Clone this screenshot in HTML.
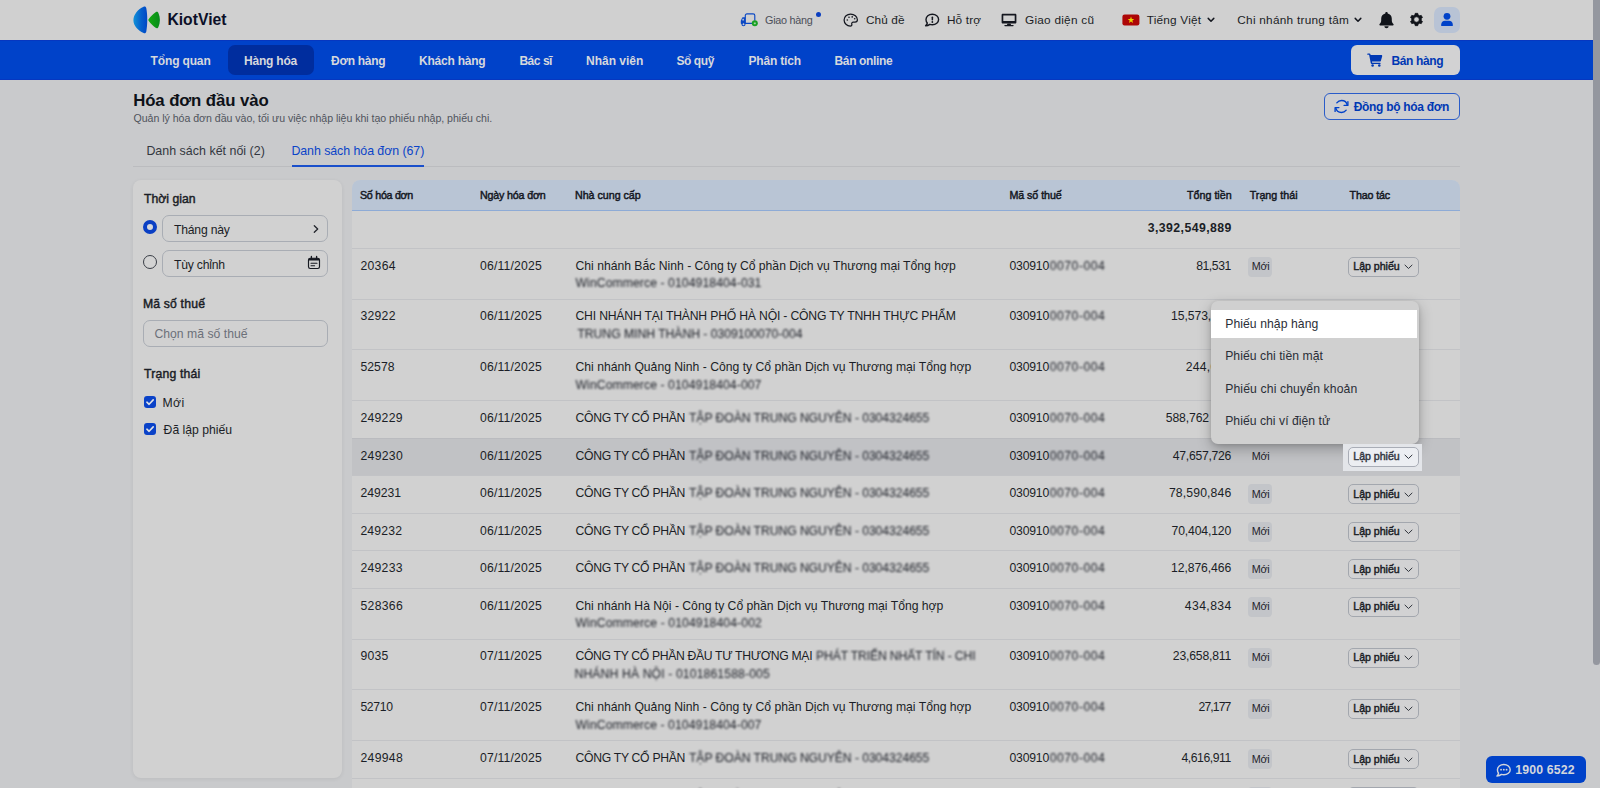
<!DOCTYPE html>
<html lang="vi">
<head>
<meta charset="utf-8">
<title>Hóa đơn đầu vào - KiotViet</title>
<style>
*{box-sizing:border-box}
html,body{margin:0;padding:0;width:1600px;height:788px;overflow:hidden;background:#c9cacc}
body{font-family:"Liberation Sans", sans-serif;color:#1b1e26;position:relative}
#app{position:absolute;left:0;top:0;width:1600px;height:788px;overflow:hidden;background:#c9cacc}
.abs{position:absolute;display:block}
h1{margin:0;font:inherit}
svg{display:block}
.t{position:absolute;display:block;white-space:nowrap}
.bl{filter:blur(1.200px)}
header.top{position:absolute;left:0;top:0;width:1600px;height:40px;background:#d0d0d0}
nav.main{position:absolute;left:0;top:40px;width:1600px;height:40px;background:#0042c9;box-shadow:inset 0 1px 0 #0637c0,inset 0 -1px 0 #0637c0}
main{position:absolute;left:0;top:0;width:1600px;height:788px}
.dot{width:5px;height:5px;border-radius:50%;background:#0b3fc0}
.ava{width:26px;height:26px;border-radius:7px;background:#b8c3d5}
.navact{background:#002d9e;border-radius:7px}
.sell{background:#d2d2d3;border-radius:6px}
.sync{border:1px solid #2a5cc9;border-radius:6px;background:#cdced1}
.tabline{height:1px;background:#bbbcbf}
.tabact{height:2px;background:#1a4fcb}
.card{background:#d1d1d1;border-radius:8px;box-shadow:0 1px 4px rgba(0,0,0,.07)}
.radio{width:14px;height:14px;border-radius:50%;border:1px solid #3a3e46;background:#d3d3d3}
.radio.on{border:4px solid #0a3fc4;background:#d6d8dc}
.inp{border:1px solid #a9adb4;border-radius:7px;background:#d1d1d1}
.chk{width:12px;height:12px;border-radius:3px;background:#0a42c8}
.grid{overflow:hidden;border-radius:8px 8px 0 0;background:#d1d1d1}
.thead{background:#b9c5d5}
.tr{border-top:1px solid #c2c3c6;background:#d1d1d1}
.tr.first{border-top-color:#8eabd6}
.tr.hov{background:#c1c2c5;border-top-color:#babbbf}
.badge{background:#c3c5c9;border-radius:4px}
.lbtn{border:1px solid #a3a7ae;border-radius:5px;background:#d2d2d3}
.lbtn.lit{background:#eceef2;border-color:#a9adb6}
.spot{background:#e3e5e9}
.z6{z-index:6}
.menu,.mtxt{z-index:5}
.menu{background:#d0d0d0;border-radius:7px;box-shadow:0 5px 14px rgba(0,0,0,.26),0 1px 4px rgba(0,0,0,.12)}
.mhi{background:#fff}
.hot{background:#0042c9;border-radius:6px}
.sb{background:#94979f;border-radius:0 0 4px 4px}
</style>
</head>
<body>
<div id="app">
<header class="top">
<svg class="abs" style="left:132px;top:5px" width="30" height="30" viewBox="0 0 30 30">
<defs><linearGradient id="lg" x1="0" y1="0" x2="1" y2="0"><stop offset="0" stop-color="#1292d8"/><stop offset=".55" stop-color="#0460cc"/><stop offset="1" stop-color="#0046c6"/></linearGradient><linearGradient id="gg" x1="0" y1="0" x2="1" y2="0"><stop offset="0" stop-color="#14aa10"/><stop offset="1" stop-color="#088a1c"/></linearGradient></defs>
<path d="M11.600 1.700 C6 4.200 1.400 9.500 1.400 15.200 C1.400 20.500 6 25.600 11.600 28 C13 28.500 14 27.900 14.300 26.400 C15.600 20 15.600 10 14.300 3.300 C14 1.800 13 1.200 11.600 1.700 Z" fill="url(#lg)"/>
<path d="M16.600 14.200 C18.500 11.500 21 9 23.600 7.200 C24.800 6.400 26 6.800 26.400 8 C28.400 12.500 28.400 17.500 26.400 22 C26 23.200 24.800 23.600 23.600 22.800 C21 21 18.500 18.500 16.600 15.800 C16.200 15.300 16.200 14.700 16.600 14.200 Z" fill="url(#gg)"/>
</svg>
<span class="t" style="left:167.40px;top:8px;line-height:23px;font-size:15.7px;color:#0c1028;font-weight:700;letter-spacing:0.020px">KiotViet</span>
<svg class="abs" style="left:740px;top:13px" width="19" height="14" viewBox="0 0 19 14" fill="none">
<path d="M5.300 10.400 V2.600 C5.300 1.500 6 .9 7 .9 H13.100 C14.200 .9 14.800 1.600 14.800 2.600 V7.200" stroke="#0b48c4" stroke-width="1.150" stroke-linecap="round"/>
<path d="M5.300 10.400 H11.800" stroke="#0b48c4" stroke-width="1.150" stroke-linecap="round"/>
<path d="M5.200 4.300 H3.300 C2.500 4.300 2.100 4.700 1.800 5.400 L.8 7.700 V10.300 C.8 10.800 1.100 11.100 1.600 11.100 H5.200 Z" fill="#0b48c4"/>
<rect x="2.300" y="5.700" width="1.700" height="1.800" rx=".3" fill="#aebbd6"/>
<circle cx="3.500" cy="11.300" r="1.500" fill="#d0d0d0" stroke="#0b48c4" stroke-width="1.100"/>
<circle cx="14.800" cy="10.300" r="3" fill="#18a022"/><rect x="13.800" y="9.400" width="2" height="1.800" rx=".4" fill="#9fd4a0"/>
</svg>
<span class="t" style="left:765.00px;top:11px;line-height:18px;font-size:10.8px;color:#4b4f58;letter-spacing:-0.265px">Giao hàng</span>
<span class="abs dot" style="left:816px;top:12px"></span>
<svg class="abs" style="left:843px;top:13px" width="16" height="14" viewBox="0 0 16 14" fill="none">
<path d="M7.6 1 C4 1 1.1 3.7 1.1 7 C1.1 10.3 3.9 13 7.3 13 C8.5 13 9.1 12.2 8.8 11.3 C8.4 10.1 9.1 9.1 10.4 9.1 H12 C13.4 9.1 14.4 8.1 14.4 6.7 C14.4 3.5 11.3 1 7.6 1 Z" stroke="#14171f" stroke-width="1.250"/>
<circle cx="4.300" cy="7" r=".8" fill="#14171f"/><circle cx="6" cy="4.300" r=".8" fill="#14171f"/><circle cx="9.200" cy="3.900" r=".8" fill="#14171f"/><circle cx="11.700" cy="5.800" r=".8" fill="#14171f"/>
</svg>
<span class="t" style="left:865.90px;top:10px;line-height:20px;font-size:11.8px;color:#1b1e26;letter-spacing:0.124px">Chủ đề</span>
<svg class="abs" style="left:924px;top:13px" width="16" height="14" viewBox="0 0 16 14" fill="none">
<path d="M8.3 1.2 C11.9 1.2 14.6 3.5 14.6 6.5 C14.6 9.5 11.9 11.8 8.3 11.8 C7.4 11.8 6.6 11.7 5.8 11.4 C4.8 12.2 3.4 12.8 1.6 12.8 C2.5 12 3.1 11 3.3 10 C2.5 9.1 2 7.9 2 6.5 C2 3.5 4.7 1.2 8.3 1.2 Z" stroke="#14171f" stroke-width="1.4" stroke-linejoin="round"/>
<rect x="7.6" y="3.5" width="1.5" height="4" rx=".7" fill="#14171f"/><circle cx="8.35" cy="9" r=".9" fill="#14171f"/>
</svg>
<span class="t" style="left:946.90px;top:10px;line-height:20px;font-size:11.8px;color:#1b1e26;letter-spacing:0.167px">Hỗ trợ</span>
<svg class="abs" style="left:1001px;top:13px" width="16" height="14" viewBox="0 0 16 14">
<path d="M1.900 .8 H14.100 C14.900 .8 15.400 1.300 15.400 2.100 V9.300 C15.400 10.100 14.900 10.600 14.100 10.600 H1.900 C1.100 10.600 .6 10.100 .6 9.300 V2.100 C.6 1.300 1.100 .8 1.900 .8 Z M2.300 2.400 V8 H13.700 V2.400 Z" fill="#14171f" fill-rule="evenodd"/>
<path d="M6.500 10.500 H9.500 L10.100 12 H12 C12.500 12 12.700 12.250 12.700 12.600 C12.700 12.950 12.500 13.200 12 13.200 H4 C3.500 13.200 3.300 12.950 3.300 12.600 C3.300 12.250 3.500 12 4 12 H5.900 Z" fill="#14171f"/>
</svg>
<span class="t" style="left:1025.00px;top:10px;line-height:20px;font-size:11.8px;color:#1b1e26;letter-spacing:0.248px">Giao diện cũ</span>
<svg class="abs" style="left:1122px;top:14px" width="18" height="12" viewBox="0 0 18 12">
<rect x=".4" y=".5" width="17" height="11" rx="2.200" fill="#ad0606"/>
<path d="M9 2.600 L9.850 5 L12.300 5.050 L10.350 6.550 L11.050 8.900 L9 7.500 L6.950 8.900 L7.650 6.550 L5.700 5.050 L8.150 5 Z" fill="#ead400"/>
</svg>
<span class="t" style="left:1146.80px;top:10px;line-height:20px;font-size:11.8px;color:#1b1e26;letter-spacing:0.190px">Tiếng Việt</span>
<svg class="abs" style="left:1207px;top:16px" width="8" height="8" viewBox="0 0 8 8" fill="none"><path d="M1.2 2.4 L4 5.2 L6.8 2.4" stroke="#14171f" stroke-width="1.5" stroke-linecap="round" stroke-linejoin="round"/></svg>
<span class="t" style="left:1237.30px;top:10px;line-height:20px;font-size:11.8px;color:#1b1e26;letter-spacing:0.257px">Chi nhánh trung tâm</span>
<svg class="abs" style="left:1354px;top:16px" width="8" height="8" viewBox="0 0 8 8" fill="none"><path d="M1.2 2.4 L4 5.2 L6.8 2.4" stroke="#14171f" stroke-width="1.5" stroke-linecap="round" stroke-linejoin="round"/></svg>
<svg class="abs" style="left:1378px;top:11px" width="17" height="18" viewBox="0 0 17 18">
<path d="M8.5 .9 C9.2 .9 9.7 1.4 9.7 2.1 V2.6 C12.2 3.1 13.8 5.2 13.8 7.8 V9.2 C13.8 10.9 14.4 12.1 15.4 13.1 C15.9 13.6 15.6 14.5 14.8 14.5 H2.2 C1.4 14.5 1.1 13.6 1.6 13.1 C2.6 12.1 3.2 10.9 3.2 9.2 V7.8 C3.2 5.2 4.8 3.1 7.3 2.6 V2.1 C7.3 1.4 7.8 .9 8.5 .9 Z" fill="#101319"/>
<path d="M6.4 15.3 H10.6 C10.6 16.5 9.7 17.3 8.5 17.3 C7.3 17.3 6.4 16.5 6.4 15.3 Z" fill="#101319"/>
</svg>
<svg class="abs" style="left:1409px;top:12px" width="15" height="15" viewBox="-7.5 -7.5 15 15">
<path d="M-1.56 -4.64 L-1.31 -6.16 L1.31 -6.16 L1.56 -4.64 L3.24 -3.68 L4.68 -4.22 L5.99 -1.95 L4.80 -0.97 L4.80 0.97 L5.99 1.95 L4.68 4.22 L3.24 3.68 L1.56 4.64 L1.31 6.16 L-1.31 6.16 L-1.56 4.64 L-3.24 3.68 L-4.68 4.22 L-5.99 1.95 L-4.80 0.97 L-4.80 -0.97 L-5.99 -1.95 L-4.68 -4.22 L-3.24 -3.68 Z M2.7 0 A2.7 2.7 0 1 0 -2.7 0 A2.7 2.7 0 1 0 2.7 0 Z" fill="#101319" fill-rule="evenodd" stroke="#101319" stroke-width=".7" stroke-linejoin="round"/>
</svg>
<span class="abs ava" style="left:1434px;top:7px"><svg width="26" height="26" viewBox="0 0 26 26"><circle cx="13" cy="9.3" r="3.4" fill="#0042c9"/><path d="M7.2 18.9 V17.6 C7.2 15.3 8.9 13.8 11 13.8 H15 C17.100 13.8 18.8 15.3 18.8 17.6 V18.9 Z" fill="#0042c9"/></svg></span>
</header>
<nav class="main">
<span class="abs navact" style="left:227.500px;top:5px;width:86.500px;height:30px"></span>
<span class="t" style="left:150.60px;top:11px;line-height:20px;font-size:12.0px;color:#d6d8dc;font-weight:700;letter-spacing:-0.149px">Tổng quan</span>
<span class="t" style="left:244.00px;top:11px;line-height:20px;font-size:12.0px;color:#d6d8dc;font-weight:700;letter-spacing:-0.213px">Hàng hóa</span>
<span class="t" style="left:331.00px;top:11px;line-height:20px;font-size:12.0px;color:#d6d8dc;font-weight:700;letter-spacing:-0.271px">Đơn hàng</span>
<span class="t" style="left:419.00px;top:11px;line-height:20px;font-size:12.0px;color:#d6d8dc;font-weight:700;letter-spacing:-0.227px">Khách hàng</span>
<span class="t" style="left:519.40px;top:11px;line-height:20px;font-size:12.0px;color:#d6d8dc;font-weight:700;letter-spacing:-0.464px">Bác sĩ</span>
<span class="t" style="left:586.00px;top:11px;line-height:20px;font-size:12.0px;color:#d6d8dc;font-weight:700">Nhân viên</span>
<span class="t" style="left:676.40px;top:11px;line-height:20px;font-size:12.0px;color:#d6d8dc;font-weight:700;letter-spacing:-0.406px">Sổ quỹ</span>
<span class="t" style="left:748.40px;top:11px;line-height:20px;font-size:12.0px;color:#d6d8dc;font-weight:700;letter-spacing:-0.159px">Phân tích</span>
<span class="t" style="left:834.50px;top:11px;line-height:20px;font-size:12.0px;color:#d6d8dc;font-weight:700;letter-spacing:-0.351px">Bán online</span>
<span class="abs sell" style="left:1351px;top:5px;width:109px;height:30px"></span>
<svg class="abs" style="left:1367px;top:13px" width="16" height="14" viewBox="0 0 16 14">
<path d="M.9 .5 H2.4 C3 .5 3.400 .8 3.500 1.400 L3.650 2.100 H14.300 C15 2.100 15.400 2.700 15.200 3.300 L13.900 7.700 C13.700 8.300 13.300 8.600 12.700 8.600 H5 L5.200 9.700 H13 C13.450 9.700 13.700 10 13.700 10.350 C13.700 10.750 13.450 11 13 11 H4.700 C4.200 11 3.900 10.700 3.800 10.200 L2.100 1.800 H.9 C.45 1.800 .2 1.550 .2 1.150 C.2 .8 .45 .5 .9 .5 Z" fill="#0038b4"/>
<circle cx="5.600" cy="12.500" r="1.250" fill="#0038b4"/><circle cx="12.300" cy="12.500" r="1.250" fill="#0038b4"/></svg>
<span class="t" style="left:1391.40px;top:11px;line-height:20px;font-size:12.0px;color:#0038b4;font-weight:700;letter-spacing:-0.348px">Bán hàng</span>
</nav>
<main>
<h1 class="abs0"><span class="t" style="left:133.20px;top:88px;line-height:25px;font-size:16.8px;color:#0e1118;font-weight:700;letter-spacing:-0.102px">Hóa đơn đầu vào</span></h1>
<span class="t" style="left:133.50px;top:109px;line-height:18px;font-size:10.6px;color:#50545c;letter-spacing:-0.030px">Quản lý hóa đơn đầu vào, tối ưu việc nhập liệu khi tạo phiếu nhập, phiếu chi.</span>
<span class="abs sync" style="left:1324px;top:93px;width:136px;height:27px"></span>
<svg class="abs" style="left:1334px;top:99px" width="15" height="15" viewBox="0 0 15 15" fill="none">
<path d="M13.300 6.300 C12.800 3.500 10.400 1.500 7.500 1.500 C5.600 1.500 3.900 2.400 2.800 3.800" stroke="#0042c9" stroke-width="1.350" stroke-linecap="round"/>
<path d="M1.700 8.700 C2.200 11.500 4.600 13.500 7.500 13.500 C9.400 13.500 11.100 12.600 12.200 11.200" stroke="#0042c9" stroke-width="1.350" stroke-linecap="round"/>
<path d="M13.900 2.600 V6.400 H10.100" stroke="#0042c9" stroke-width="1.350" stroke-linecap="round" stroke-linejoin="round"/>
<path d="M1.100 12.400 V8.600 H4.900" stroke="#0042c9" stroke-width="1.350" stroke-linecap="round" stroke-linejoin="round"/>
</svg>
<span class="t" style="left:1353.70px;top:97px;line-height:20px;font-size:12.0px;color:#0038b4;font-weight:700;letter-spacing:-0.301px">Đồng bộ hóa đơn</span>
<div class="abs tabline" style="left:133px;top:166px;width:1327px"></div>
<span class="t" style="left:146.40px;top:141px;line-height:20px;font-size:12.4px;color:#33373f;letter-spacing:0.033px">Danh sách kết nối (2)</span>
<span class="t" style="left:291.40px;top:141px;line-height:20px;font-size:12.4px;color:#0b44c8;letter-spacing:-0.060px">Danh sách hóa đơn (67)</span>
<div class="abs tabact" style="left:292px;top:165px;width:132px"></div>
<aside class="filter">
<div class="abs card" style="left:133px;top:180px;width:208.500px;height:598px"></div>
<span class="t" style="left:144.00px;top:189px;line-height:20px;font-size:12.2px;color:#1b1e26;-webkit-text-stroke:0.45px;letter-spacing:0.035px">Thời gian</span>
<span class="abs radio on" style="left:143px;top:220px"></span>
<span class="abs inp" style="left:162px;top:215px;width:166px;height:27px"></span>
<span class="t" style="left:174.00px;top:220px;line-height:20px;font-size:12.2px;color:#1b1e26;letter-spacing:-0.212px">Tháng này</span>
<svg class="abs" style="left:312px;top:223.500px" width="8" height="10" viewBox="0 0 8 10" fill="none"><path d="M2.300 1.700 L5.700 5 L2.300 8.300" stroke="#22252c" stroke-width="1.300" stroke-linecap="round" stroke-linejoin="round"/></svg>
<span class="abs radio" style="left:143px;top:255px"></span>
<span class="abs inp" style="left:162px;top:250px;width:166px;height:27px"></span>
<span class="t" style="left:174.00px;top:255px;line-height:20px;font-size:12.2px;color:#1b1e26;letter-spacing:-0.233px">Tùy chỉnh</span>
<svg class="abs" style="left:307px;top:255px" width="14" height="15" viewBox="0 0 14 15" fill="none">
<rect x="1.500" y="3.200" width="11" height="10.300" rx="1.700" stroke="#171a22" stroke-width="1.150"/>
<path d="M1.500 4.800 C1.500 3.900 2.200 3.200 3.100 3.200 H10.900 C11.800 3.200 12.500 3.900 12.500 4.800 V5.600 H1.500 Z" fill="#171a22"/>
<path d="M4.400 1.300 V3.600 M9.600 1.300 V3.600" stroke="#171a22" stroke-width="1.300" stroke-linecap="round"/>
<path d="M4 8.300 H10 M4 10.700 H7.600" stroke="#171a22" stroke-width="1.050" stroke-linecap="round"/>
</svg>
<span class="t" style="left:142.90px;top:294px;line-height:20px;font-size:12.2px;color:#1b1e26;-webkit-text-stroke:0.45px;letter-spacing:0.193px">Mã số thuế</span>
<span class="abs inp" style="left:143px;top:320px;width:185px;height:27px"></span>
<span class="t" style="left:154.40px;top:324px;line-height:20px;font-size:12.2px;color:#6c7079;letter-spacing:0.026px">Chọn mã số thuế</span>
<span class="t" style="left:144.00px;top:364px;line-height:20px;font-size:12.2px;color:#1b1e26;-webkit-text-stroke:0.45px;letter-spacing:0.204px">Trạng thái</span>
<span class="abs chk" style="left:144px;top:396px"><svg width="12" height="12" viewBox="0 0 12 12" fill="none"><path d="M2.900 6.200 L5.100 8.300 L9.200 3.900" stroke="#dfe2e8" stroke-width="1.600" stroke-linecap="round" stroke-linejoin="round"/></svg></span>
<span class="t" style="left:162.60px;top:393px;line-height:20px;font-size:12.2px;color:#1b1e26;letter-spacing:0.378px">Mới</span>
<span class="abs chk" style="left:144px;top:423px"><svg width="12" height="12" viewBox="0 0 12 12" fill="none"><path d="M2.900 6.200 L5.100 8.300 L9.200 3.900" stroke="#dfe2e8" stroke-width="1.600" stroke-linecap="round" stroke-linejoin="round"/></svg></span>
<span class="t" style="left:163.60px;top:420px;line-height:20px;font-size:12.2px;color:#1b1e26;letter-spacing:-0.005px">Đã lập phiếu</span>
</aside>
<section class="invoices">
<div class="abs grid" style="left:352px;top:180px;width:1108px;height:608px">
<div class="abs thead" style="left:0;top:0;width:1108px;height:30px"></div>
<div class="abs tr first" style="left:0;top:30px;width:1108px;height:38px"></div>
<div class="abs tr" style="left:0;top:68px;width:1108px;height:51px"></div>
<div class="abs tr" style="left:0;top:119px;width:1108px;height:50px"></div>
<div class="abs tr" style="left:0;top:169px;width:1108px;height:51px"></div>
<div class="abs tr" style="left:0;top:220px;width:1108px;height:38px"></div>
<div class="abs tr hov" style="left:0;top:258px;width:1108px;height:37px"></div>
<div class="abs tr" style="left:0;top:295px;width:1108px;height:38px"></div>
<div class="abs tr" style="left:0;top:333px;width:1108px;height:37px"></div>
<div class="abs tr" style="left:0;top:370px;width:1108px;height:38px"></div>
<div class="abs tr" style="left:0;top:408px;width:1108px;height:51px"></div>
<div class="abs tr" style="left:0;top:459px;width:1108px;height:50px"></div>
<div class="abs tr" style="left:0;top:509px;width:1108px;height:51px"></div>
<div class="abs tr" style="left:0;top:560px;width:1108px;height:38px"></div>
<div class="abs tr" style="left:0;top:598px;width:1108px;height:37px"></div>
</div>
<div class="row head">
<span class="t" style="left:360.00px;top:186px;line-height:18px;font-size:10.7px;color:#14171f;-webkit-text-stroke:0.45px;letter-spacing:-0.277px">Số hóa đơn</span>
<span class="t" style="left:480.00px;top:186px;line-height:18px;font-size:10.7px;color:#14171f;-webkit-text-stroke:0.45px;letter-spacing:-0.170px">Ngày hóa đơn</span>
<span class="t" style="left:575.00px;top:186px;line-height:18px;font-size:10.7px;color:#14171f;-webkit-text-stroke:0.45px;letter-spacing:-0.019px">Nhà cung cấp</span>
<span class="t" style="left:1009.40px;top:186px;line-height:18px;font-size:10.7px;color:#14171f;-webkit-text-stroke:0.45px;letter-spacing:-0.053px">Mã số thuế</span>
<span class="t" style="left:1187.10px;top:186px;line-height:18px;font-size:10.7px;color:#14171f;-webkit-text-stroke:0.45px;letter-spacing:-0.008px">Tổng tiền</span>
<span class="t" style="left:1249.70px;top:186px;line-height:18px;font-size:10.7px;color:#14171f;-webkit-text-stroke:0.45px;letter-spacing:0.011px">Trạng thái</span>
<span class="t" style="left:1349.60px;top:186px;line-height:18px;font-size:10.7px;color:#14171f;-webkit-text-stroke:0.45px;letter-spacing:-0.142px">Thao tác</span>
</div>
<div class="row total"><span class="t" style="left:1147.80px;top:218px;line-height:20px;font-size:12.3px;color:#1b1e26;font-weight:700;letter-spacing:0.408px">3,392,549,889</span></div>
<div class="row">
<span class="t" style="left:360.40px;top:256px;line-height:20px;font-size:12.2px;color:#1b1e26;letter-spacing:0.309px">20364</span>
<span class="t" style="left:480.00px;top:256px;line-height:20px;font-size:12.2px;color:#1b1e26;letter-spacing:0.187px">06/11/2025</span>
<span class="t" style="left:575.50px;top:256px;line-height:20px;font-size:12.2px;color:#1b1e26;letter-spacing:-0.008px">Chi nhánh Bắc Ninh - Công ty Cổ phần Dịch vụ Thương mại Tổng hợp</span>
<span class="t bl" style="left:575.50px;top:273px;line-height:20px;font-size:12.2px;color:#1b1e26;letter-spacing:0.085px">WinCommerce - 0104918404-031</span>
<span class="t" style="left:1009.40px;top:256px;line-height:20px;font-size:12.2px;color:#1b1e26;letter-spacing:-0.158px">030910</span>
<span class="t bl" style="left:1049.80px;top:256px;line-height:20px;font-size:12.2px;color:#1b1e26;letter-spacing:0.496px">0070-004</span>
<span class="t" style="left:1196.20px;top:256px;line-height:20px;font-size:12.2px;color:#1b1e26;letter-spacing:-0.440px">81,531</span>
<span class="abs badge" style="left:1248px;top:256.8px;width:24px;height:20px"></span>
<span class="t" style="left:1251.80px;top:257px;line-height:18px;font-size:10.8px;color:#1f232b;letter-spacing:-0.337px">Mới</span>
<span class="abs lbtn" style="left:1348px;top:256.8px;width:70.500px;height:20px"></span>
<span class="t" style="left:1353.30px;top:257px;line-height:18px;font-size:10.6px;color:#1b1e26;-webkit-text-stroke:0.45px;letter-spacing:-0.025px">Lập phiếu</span>
<svg class="abs" style="left:1404.300px;top:264.2px" width="9" height="6" viewBox="0 0 9 6" fill="none"><path d="M1 1.100 L4.500 4.500 L8 1.100" stroke="#30343c" stroke-width="1" stroke-linecap="round" stroke-linejoin="round"/></svg>
</div>
<div class="row">
<span class="t" style="left:360.40px;top:306px;line-height:20px;font-size:12.2px;color:#1b1e26;letter-spacing:0.297px">32922</span>
<span class="t" style="left:480.00px;top:306px;line-height:20px;font-size:12.2px;color:#1b1e26;letter-spacing:0.187px">06/11/2025</span>
<span class="t" style="left:575.50px;top:306px;line-height:20px;font-size:12.2px;color:#1b1e26;letter-spacing:-0.184px">CHI NHÁNH TẠI THÀNH PHỐ HÀ NỘI - CÔNG TY TNHH THỰC PHẨM</span>
<span class="t bl" style="left:577.40px;top:324px;line-height:20px;font-size:12.2px;color:#1b1e26;letter-spacing:-0.026px">TRUNG MINH THÀNH - 0309100070-004</span>
<span class="t" style="left:1009.40px;top:306px;line-height:20px;font-size:12.2px;color:#1b1e26;letter-spacing:-0.158px">030910</span>
<span class="t bl" style="left:1049.80px;top:306px;line-height:20px;font-size:12.2px;color:#1b1e26;letter-spacing:0.496px">0070-004</span>
<span class="t" style="left:1171.10px;top:306px;line-height:20px;font-size:12.2px;color:#1b1e26;letter-spacing:-0.091px">15,573,600</span>
<span class="abs badge" style="left:1248px;top:307.6px;width:24px;height:20px"></span>
<span class="t" style="left:1251.80px;top:308px;line-height:18px;font-size:10.8px;color:#1f232b;letter-spacing:-0.337px">Mới</span>
<span class="abs lbtn" style="left:1348px;top:307.6px;width:70.500px;height:20px"></span>
<span class="t" style="left:1353.30px;top:308px;line-height:18px;font-size:10.6px;color:#1b1e26;-webkit-text-stroke:0.45px;letter-spacing:-0.025px">Lập phiếu</span>
<svg class="abs" style="left:1404.300px;top:315.0px" width="9" height="6" viewBox="0 0 9 6" fill="none"><path d="M1 1.100 L4.500 4.500 L8 1.100" stroke="#30343c" stroke-width="1" stroke-linecap="round" stroke-linejoin="round"/></svg>
</div>
<div class="row">
<span class="t" style="left:360.40px;top:357px;line-height:20px;font-size:12.2px;color:#1b1e26;letter-spacing:0.072px">52578</span>
<span class="t" style="left:480.00px;top:357px;line-height:20px;font-size:12.2px;color:#1b1e26;letter-spacing:0.187px">06/11/2025</span>
<span class="t" style="left:575.50px;top:357px;line-height:20px;font-size:12.2px;color:#1b1e26;letter-spacing:-0.007px">Chi nhánh Quảng Ninh - Công ty Cổ phần Dịch vụ Thương mại Tổng hợp</span>
<span class="t bl" style="left:575.50px;top:375px;line-height:20px;font-size:12.2px;color:#1b1e26;letter-spacing:0.085px">WinCommerce - 0104918404-007</span>
<span class="t" style="left:1009.40px;top:357px;line-height:20px;font-size:12.2px;color:#1b1e26;letter-spacing:-0.158px">030910</span>
<span class="t bl" style="left:1049.80px;top:357px;line-height:20px;font-size:12.2px;color:#1b1e26;letter-spacing:0.496px">0070-004</span>
<span class="t" style="left:1185.80px;top:357px;line-height:20px;font-size:12.2px;color:#1b1e26;letter-spacing:0.237px">244,080</span>
<span class="abs badge" style="left:1248px;top:358.5px;width:24px;height:20px"></span>
<span class="t" style="left:1251.80px;top:359px;line-height:18px;font-size:10.8px;color:#1f232b;letter-spacing:-0.337px">Mới</span>
<span class="abs lbtn" style="left:1348px;top:358.5px;width:70.500px;height:20px"></span>
<span class="t" style="left:1353.30px;top:359px;line-height:18px;font-size:10.6px;color:#1b1e26;-webkit-text-stroke:0.45px;letter-spacing:-0.025px">Lập phiếu</span>
<svg class="abs" style="left:1404.300px;top:365.9px" width="9" height="6" viewBox="0 0 9 6" fill="none"><path d="M1 1.100 L4.500 4.500 L8 1.100" stroke="#30343c" stroke-width="1" stroke-linecap="round" stroke-linejoin="round"/></svg>
</div>
<div class="row">
<span class="t" style="left:360.40px;top:408px;line-height:20px;font-size:12.2px;color:#1b1e26;letter-spacing:0.282px">249229</span>
<span class="t" style="left:480.00px;top:408px;line-height:20px;font-size:12.2px;color:#1b1e26;letter-spacing:0.187px">06/11/2025</span>
<span class="t" style="left:575.50px;top:408px;line-height:20px;font-size:12.2px;color:#1b1e26;letter-spacing:-0.295px">CÔNG TY CỔ PHẦN</span>
<span class="t bl" style="left:689.00px;top:408px;line-height:20px;font-size:12.2px;color:#1b1e26;letter-spacing:-0.072px">TẬP ĐOÀN TRUNG NGUYÊN - 0304324655</span>
<span class="t" style="left:1009.40px;top:408px;line-height:20px;font-size:12.2px;color:#1b1e26;letter-spacing:-0.158px">030910</span>
<span class="t bl" style="left:1049.80px;top:408px;line-height:20px;font-size:12.2px;color:#1b1e26;letter-spacing:0.496px">0070-004</span>
<span class="t" style="left:1165.80px;top:408px;line-height:20px;font-size:12.2px;color:#1b1e26;letter-spacing:-0.129px">588,762</span>
<span class="abs badge" style="left:1248px;top:409.3px;width:24px;height:20px"></span>
<span class="t" style="left:1251.80px;top:410px;line-height:18px;font-size:10.8px;color:#1f232b;letter-spacing:-0.337px">Mới</span>
<span class="abs lbtn" style="left:1348px;top:409.3px;width:70.500px;height:20px"></span>
<span class="t" style="left:1353.30px;top:410px;line-height:18px;font-size:10.6px;color:#1b1e26;-webkit-text-stroke:0.45px;letter-spacing:-0.025px">Lập phiếu</span>
<svg class="abs" style="left:1404.300px;top:416.7px" width="9" height="6" viewBox="0 0 9 6" fill="none"><path d="M1 1.100 L4.500 4.500 L8 1.100" stroke="#30343c" stroke-width="1" stroke-linecap="round" stroke-linejoin="round"/></svg>
</div>
<div class="row">
<span class="t" style="left:360.40px;top:446px;line-height:20px;font-size:12.2px;color:#1b1e26;letter-spacing:0.342px">249230</span>
<span class="t" style="left:480.00px;top:446px;line-height:20px;font-size:12.2px;color:#1b1e26;letter-spacing:0.187px">06/11/2025</span>
<span class="t" style="left:575.50px;top:446px;line-height:20px;font-size:12.2px;color:#1b1e26;letter-spacing:-0.295px">CÔNG TY CỔ PHẦN</span>
<span class="t bl" style="left:689.00px;top:446px;line-height:20px;font-size:12.2px;color:#1b1e26;letter-spacing:-0.072px">TẬP ĐOÀN TRUNG NGUYÊN - 0304324655</span>
<span class="t" style="left:1009.40px;top:446px;line-height:20px;font-size:12.2px;color:#1b1e26;letter-spacing:-0.158px">030910</span>
<span class="t bl" style="left:1049.80px;top:446px;line-height:20px;font-size:12.2px;color:#1b1e26;letter-spacing:0.496px">0070-004</span>
<span class="t" style="left:1172.80px;top:446px;line-height:20px;font-size:12.2px;color:#1b1e26;letter-spacing:-0.280px">47,657,726</span>
<span class="abs spot z6" style="left:1343px;top:443.500px;width:79px;height:27.500px"></span>
<span class="t" style="left:1251.80px;top:447px;line-height:18px;font-size:10.8px;color:#1f232b;letter-spacing:-0.337px">Mới</span>
<span class="abs lbtn lit z6" style="left:1348px;top:446.8px;width:70.500px;height:20px"></span>
<span class="t z6" style="left:1353.30px;top:447px;line-height:18px;font-size:10.6px;color:#343842;-webkit-text-stroke:0.45px;letter-spacing:-0.025px">Lập phiếu</span>
<svg class="abs z6" style="left:1404.300px;top:454.2px" width="9" height="6" viewBox="0 0 9 6" fill="none"><path d="M1 1.100 L4.500 4.500 L8 1.100" stroke="#30343c" stroke-width="1" stroke-linecap="round" stroke-linejoin="round"/></svg>
</div>
<div class="row">
<span class="t" style="left:360.40px;top:483px;line-height:20px;font-size:12.2px;color:#1b1e26;letter-spacing:-0.018px">249231</span>
<span class="t" style="left:480.00px;top:483px;line-height:20px;font-size:12.2px;color:#1b1e26;letter-spacing:0.187px">06/11/2025</span>
<span class="t" style="left:575.50px;top:483px;line-height:20px;font-size:12.2px;color:#1b1e26;letter-spacing:-0.295px">CÔNG TY CỔ PHẦN</span>
<span class="t bl" style="left:689.00px;top:483px;line-height:20px;font-size:12.2px;color:#1b1e26;letter-spacing:-0.072px">TẬP ĐOÀN TRUNG NGUYÊN - 0304324655</span>
<span class="t" style="left:1009.40px;top:483px;line-height:20px;font-size:12.2px;color:#1b1e26;letter-spacing:-0.158px">030910</span>
<span class="t bl" style="left:1049.80px;top:483px;line-height:20px;font-size:12.2px;color:#1b1e26;letter-spacing:0.496px">0070-004</span>
<span class="t" style="left:1168.90px;top:483px;line-height:20px;font-size:12.2px;color:#1b1e26;letter-spacing:0.153px">78,590,846</span>
<span class="abs badge" style="left:1248px;top:484.3px;width:24px;height:20px"></span>
<span class="t" style="left:1251.80px;top:485px;line-height:18px;font-size:10.8px;color:#1f232b;letter-spacing:-0.337px">Mới</span>
<span class="abs lbtn" style="left:1348px;top:484.3px;width:70.500px;height:20px"></span>
<span class="t" style="left:1353.30px;top:485px;line-height:18px;font-size:10.6px;color:#1b1e26;-webkit-text-stroke:0.45px;letter-spacing:-0.025px">Lập phiếu</span>
<svg class="abs" style="left:1404.300px;top:491.7px" width="9" height="6" viewBox="0 0 9 6" fill="none"><path d="M1 1.100 L4.500 4.500 L8 1.100" stroke="#30343c" stroke-width="1" stroke-linecap="round" stroke-linejoin="round"/></svg>
</div>
<div class="row">
<span class="t" style="left:360.40px;top:521px;line-height:20px;font-size:12.2px;color:#1b1e26;letter-spacing:0.182px">249232</span>
<span class="t" style="left:480.00px;top:521px;line-height:20px;font-size:12.2px;color:#1b1e26;letter-spacing:0.187px">06/11/2025</span>
<span class="t" style="left:575.50px;top:521px;line-height:20px;font-size:12.2px;color:#1b1e26;letter-spacing:-0.295px">CÔNG TY CỔ PHẦN</span>
<span class="t bl" style="left:689.00px;top:521px;line-height:20px;font-size:12.2px;color:#1b1e26;letter-spacing:-0.072px">TẬP ĐOÀN TRUNG NGUYÊN - 0304324655</span>
<span class="t" style="left:1009.40px;top:521px;line-height:20px;font-size:12.2px;color:#1b1e26;letter-spacing:-0.158px">030910</span>
<span class="t bl" style="left:1049.80px;top:521px;line-height:20px;font-size:12.2px;color:#1b1e26;letter-spacing:0.496px">0070-004</span>
<span class="t" style="left:1171.50px;top:521px;line-height:20px;font-size:12.2px;color:#1b1e26;letter-spacing:-0.135px">70,404,120</span>
<span class="abs badge" style="left:1248px;top:521.8px;width:24px;height:20px"></span>
<span class="t" style="left:1251.80px;top:522px;line-height:18px;font-size:10.8px;color:#1f232b;letter-spacing:-0.337px">Mới</span>
<span class="abs lbtn" style="left:1348px;top:521.8px;width:70.500px;height:20px"></span>
<span class="t" style="left:1353.30px;top:522px;line-height:18px;font-size:10.6px;color:#1b1e26;-webkit-text-stroke:0.45px;letter-spacing:-0.025px">Lập phiếu</span>
<svg class="abs" style="left:1404.300px;top:529.2px" width="9" height="6" viewBox="0 0 9 6" fill="none"><path d="M1 1.100 L4.500 4.500 L8 1.100" stroke="#30343c" stroke-width="1" stroke-linecap="round" stroke-linejoin="round"/></svg>
</div>
<div class="row">
<span class="t" style="left:360.40px;top:558px;line-height:20px;font-size:12.2px;color:#1b1e26;letter-spacing:0.282px">249233</span>
<span class="t" style="left:480.00px;top:558px;line-height:20px;font-size:12.2px;color:#1b1e26;letter-spacing:0.187px">06/11/2025</span>
<span class="t" style="left:575.50px;top:558px;line-height:20px;font-size:12.2px;color:#1b1e26;letter-spacing:-0.295px">CÔNG TY CỔ PHẦN</span>
<span class="t bl" style="left:689.00px;top:558px;line-height:20px;font-size:12.2px;color:#1b1e26;letter-spacing:-0.072px">TẬP ĐOÀN TRUNG NGUYÊN - 0304324655</span>
<span class="t" style="left:1009.40px;top:558px;line-height:20px;font-size:12.2px;color:#1b1e26;letter-spacing:-0.158px">030910</span>
<span class="t bl" style="left:1049.80px;top:558px;line-height:20px;font-size:12.2px;color:#1b1e26;letter-spacing:0.496px">0070-004</span>
<span class="t" style="left:1171.00px;top:558px;line-height:20px;font-size:12.2px;color:#1b1e26;letter-spacing:-0.080px">12,876,466</span>
<span class="abs badge" style="left:1248px;top:559.3px;width:24px;height:20px"></span>
<span class="t" style="left:1251.80px;top:560px;line-height:18px;font-size:10.8px;color:#1f232b;letter-spacing:-0.337px">Mới</span>
<span class="abs lbtn" style="left:1348px;top:559.3px;width:70.500px;height:20px"></span>
<span class="t" style="left:1353.30px;top:560px;line-height:18px;font-size:10.6px;color:#1b1e26;-webkit-text-stroke:0.45px;letter-spacing:-0.025px">Lập phiếu</span>
<svg class="abs" style="left:1404.300px;top:566.7px" width="9" height="6" viewBox="0 0 9 6" fill="none"><path d="M1 1.100 L4.500 4.500 L8 1.100" stroke="#30343c" stroke-width="1" stroke-linecap="round" stroke-linejoin="round"/></svg>
</div>
<div class="row">
<span class="t" style="left:360.40px;top:596px;line-height:20px;font-size:12.2px;color:#1b1e26;letter-spacing:0.342px">528366</span>
<span class="t" style="left:480.00px;top:596px;line-height:20px;font-size:12.2px;color:#1b1e26;letter-spacing:0.187px">06/11/2025</span>
<span class="t" style="left:575.50px;top:596px;line-height:20px;font-size:12.2px;color:#1b1e26;letter-spacing:-0.011px">Chi nhánh Hà Nội - Công ty Cổ phần Dịch vụ Thương mại Tổng hợp</span>
<span class="t bl" style="left:575.50px;top:613px;line-height:20px;font-size:12.2px;color:#1b1e26;letter-spacing:0.100px">WinCommerce - 0104918404-002</span>
<span class="t" style="left:1009.40px;top:596px;line-height:20px;font-size:12.2px;color:#1b1e26;letter-spacing:-0.158px">030910</span>
<span class="t bl" style="left:1049.80px;top:596px;line-height:20px;font-size:12.2px;color:#1b1e26;letter-spacing:0.496px">0070-004</span>
<span class="t" style="left:1184.80px;top:596px;line-height:20px;font-size:12.2px;color:#1b1e26;letter-spacing:0.404px">434,834</span>
<span class="abs badge" style="left:1248px;top:596.8px;width:24px;height:20px"></span>
<span class="t" style="left:1251.80px;top:597px;line-height:18px;font-size:10.8px;color:#1f232b;letter-spacing:-0.337px">Mới</span>
<span class="abs lbtn" style="left:1348px;top:596.8px;width:70.500px;height:20px"></span>
<span class="t" style="left:1353.30px;top:597px;line-height:18px;font-size:10.6px;color:#1b1e26;-webkit-text-stroke:0.45px;letter-spacing:-0.025px">Lập phiếu</span>
<svg class="abs" style="left:1404.300px;top:604.2px" width="9" height="6" viewBox="0 0 9 6" fill="none"><path d="M1 1.100 L4.500 4.500 L8 1.100" stroke="#30343c" stroke-width="1" stroke-linecap="round" stroke-linejoin="round"/></svg>
</div>
<div class="row">
<span class="t" style="left:360.40px;top:646px;line-height:20px;font-size:12.2px;color:#1b1e26;letter-spacing:0.289px">9035</span>
<span class="t" style="left:480.00px;top:646px;line-height:20px;font-size:12.2px;color:#1b1e26;letter-spacing:0.187px">07/11/2025</span>
<span class="t" style="left:575.50px;top:646px;line-height:20px;font-size:12.2px;color:#1b1e26;letter-spacing:-0.335px">CÔNG TY CỔ PHẦN ĐẦU TƯ THƯƠNG MẠI</span>
<span class="t bl" style="left:574.50px;top:664px;line-height:20px;font-size:12.2px;color:#1b1e26;letter-spacing:0.127px">NHÁNH HÀ NỘI - 0101861588-005</span>
<span class="t bl" style="left:816.00px;top:646px;line-height:20px;font-size:12.2px;color:#1b1e26;letter-spacing:-0.144px">PHÁT TRIỂN NHẤT TÍN - CHI</span>
<span class="t" style="left:1009.40px;top:646px;line-height:20px;font-size:12.2px;color:#1b1e26;letter-spacing:-0.158px">030910</span>
<span class="t bl" style="left:1049.80px;top:646px;line-height:20px;font-size:12.2px;color:#1b1e26;letter-spacing:0.496px">0070-004</span>
<span class="t" style="left:1172.80px;top:646px;line-height:20px;font-size:12.2px;color:#1b1e26;letter-spacing:-0.179px">23,658,811</span>
<span class="abs badge" style="left:1248px;top:647.6px;width:24px;height:20px"></span>
<span class="t" style="left:1251.80px;top:648px;line-height:18px;font-size:10.8px;color:#1f232b;letter-spacing:-0.337px">Mới</span>
<span class="abs lbtn" style="left:1348px;top:647.6px;width:70.500px;height:20px"></span>
<span class="t" style="left:1353.30px;top:648px;line-height:18px;font-size:10.6px;color:#1b1e26;-webkit-text-stroke:0.45px;letter-spacing:-0.025px">Lập phiếu</span>
<svg class="abs" style="left:1404.300px;top:655.0px" width="9" height="6" viewBox="0 0 9 6" fill="none"><path d="M1 1.100 L4.500 4.500 L8 1.100" stroke="#30343c" stroke-width="1" stroke-linecap="round" stroke-linejoin="round"/></svg>
</div>
<div class="row">
<span class="t" style="left:360.40px;top:697px;line-height:20px;font-size:12.2px;color:#1b1e26;letter-spacing:-0.328px">52710</span>
<span class="t" style="left:480.00px;top:697px;line-height:20px;font-size:12.2px;color:#1b1e26;letter-spacing:0.187px">07/11/2025</span>
<span class="t" style="left:575.50px;top:697px;line-height:20px;font-size:12.2px;color:#1b1e26;letter-spacing:-0.007px">Chi nhánh Quảng Ninh - Công ty Cổ phần Dịch vụ Thương mại Tổng hợp</span>
<span class="t bl" style="left:575.50px;top:715px;line-height:20px;font-size:12.2px;color:#1b1e26;letter-spacing:0.085px">WinCommerce - 0104918404-007</span>
<span class="t" style="left:1009.40px;top:697px;line-height:20px;font-size:12.2px;color:#1b1e26;letter-spacing:-0.158px">030910</span>
<span class="t bl" style="left:1049.80px;top:697px;line-height:20px;font-size:12.2px;color:#1b1e26;letter-spacing:0.496px">0070-004</span>
<span class="t" style="left:1198.60px;top:697px;line-height:20px;font-size:12.2px;color:#1b1e26;letter-spacing:-0.920px">27,177</span>
<span class="abs badge" style="left:1248px;top:698.5px;width:24px;height:20px"></span>
<span class="t" style="left:1251.80px;top:699px;line-height:18px;font-size:10.8px;color:#1f232b;letter-spacing:-0.337px">Mới</span>
<span class="abs lbtn" style="left:1348px;top:698.5px;width:70.500px;height:20px"></span>
<span class="t" style="left:1353.30px;top:699px;line-height:18px;font-size:10.6px;color:#1b1e26;-webkit-text-stroke:0.45px;letter-spacing:-0.025px">Lập phiếu</span>
<svg class="abs" style="left:1404.300px;top:705.9px" width="9" height="6" viewBox="0 0 9 6" fill="none"><path d="M1 1.100 L4.500 4.500 L8 1.100" stroke="#30343c" stroke-width="1" stroke-linecap="round" stroke-linejoin="round"/></svg>
</div>
<div class="row">
<span class="t" style="left:360.40px;top:748px;line-height:20px;font-size:12.2px;color:#1b1e26;letter-spacing:0.342px">249948</span>
<span class="t" style="left:480.00px;top:748px;line-height:20px;font-size:12.2px;color:#1b1e26;letter-spacing:0.187px">07/11/2025</span>
<span class="t" style="left:575.50px;top:748px;line-height:20px;font-size:12.2px;color:#1b1e26;letter-spacing:-0.295px">CÔNG TY CỔ PHẦN</span>
<span class="t bl" style="left:689.00px;top:748px;line-height:20px;font-size:12.2px;color:#1b1e26;letter-spacing:-0.072px">TẬP ĐOÀN TRUNG NGUYÊN - 0304324655</span>
<span class="t" style="left:1009.40px;top:748px;line-height:20px;font-size:12.2px;color:#1b1e26;letter-spacing:-0.158px">030910</span>
<span class="t bl" style="left:1049.80px;top:748px;line-height:20px;font-size:12.2px;color:#1b1e26;letter-spacing:0.496px">0070-004</span>
<span class="t" style="left:1181.40px;top:748px;line-height:20px;font-size:12.2px;color:#1b1e26;letter-spacing:-0.429px">4,616,911</span>
<span class="abs badge" style="left:1248px;top:749.3px;width:24px;height:20px"></span>
<span class="t" style="left:1251.80px;top:750px;line-height:18px;font-size:10.8px;color:#1f232b;letter-spacing:-0.337px">Mới</span>
<span class="abs lbtn" style="left:1348px;top:749.3px;width:70.500px;height:20px"></span>
<span class="t" style="left:1353.30px;top:750px;line-height:18px;font-size:10.6px;color:#1b1e26;-webkit-text-stroke:0.45px;letter-spacing:-0.025px">Lập phiếu</span>
<svg class="abs" style="left:1404.300px;top:756.7px" width="9" height="6" viewBox="0 0 9 6" fill="none"><path d="M1 1.100 L4.500 4.500 L8 1.100" stroke="#30343c" stroke-width="1" stroke-linecap="round" stroke-linejoin="round"/></svg>
</div>
<div class="row">
<span class="t" style="left:360.40px;top:786px;line-height:20px;font-size:12.2px;color:#1b1e26;letter-spacing:0.342px">249949</span>
<span class="t" style="left:480.00px;top:786px;line-height:20px;font-size:12.2px;color:#1b1e26;letter-spacing:0.187px">07/11/2025</span>
<span class="t" style="left:575.50px;top:786px;line-height:20px;font-size:12.2px;color:#1b1e26;letter-spacing:-0.295px">CÔNG TY CỔ PHẦN</span>
<span class="t bl" style="left:689.00px;top:786px;line-height:20px;font-size:12.2px;color:#1b1e26;letter-spacing:-0.072px">TẬP ĐOÀN TRUNG NGUYÊN - 0304324655</span>
<span class="t" style="left:1009.40px;top:786px;line-height:20px;font-size:12.2px;color:#1b1e26;letter-spacing:-0.158px">030910</span>
<span class="t bl" style="left:1049.80px;top:786px;line-height:20px;font-size:12.2px;color:#1b1e26;letter-spacing:0.496px">0070-004</span>
<span class="t" style="left:1181.40px;top:786px;line-height:20px;font-size:12.2px;color:#1b1e26;letter-spacing:-0.543px">9,233,822</span>
<span class="abs badge" style="left:1248px;top:786.8px;width:24px;height:20px"></span>
<span class="t" style="left:1251.80px;top:787px;line-height:18px;font-size:10.8px;color:#1f232b;letter-spacing:-0.337px">Mới</span>
<span class="abs lbtn" style="left:1348px;top:786.8px;width:70.500px;height:20px"></span>
<span class="t" style="left:1353.30px;top:787px;line-height:18px;font-size:10.6px;color:#1b1e26;-webkit-text-stroke:0.45px;letter-spacing:-0.025px">Lập phiếu</span>
<svg class="abs" style="left:1404.300px;top:794.2px" width="9" height="6" viewBox="0 0 9 6" fill="none"><path d="M1 1.100 L4.500 4.500 L8 1.100" stroke="#30343c" stroke-width="1" stroke-linecap="round" stroke-linejoin="round"/></svg>
</div>
</section>
<div class="dropdown">
<div class="abs menu" style="left:1211px;top:301px;width:208px;height:143px">
<span class="abs mhi" style="left:0;top:9px;width:206px;height:28px"></span>
</div>
<span class="t mtxt" style="left:1225.20px;top:314px;line-height:20px;font-size:12.2px;color:#2a2e37;letter-spacing:0.065px">Phiếu nhập hàng</span>
<span class="t mtxt" style="left:1225.20px;top:346px;line-height:20px;font-size:12.2px;color:#2a2e37;letter-spacing:0.048px">Phiếu chi tiền mặt</span>
<span class="t mtxt" style="left:1225.20px;top:379px;line-height:20px;font-size:12.2px;color:#2a2e37;letter-spacing:0.127px">Phiếu chi chuyển khoản</span>
<span class="t mtxt" style="left:1225.20px;top:411px;line-height:20px;font-size:12.2px;color:#2a2e37;letter-spacing:0.031px">Phiếu chi ví điện tử</span>
</div>
<div class="hotline">
<span class="abs hot" style="left:1486px;top:756px;width:100px;height:27px"></span>
<svg class="abs" style="left:1494.500px;top:762.500px" width="17" height="15" viewBox="0 0 16 14" fill="none">
<path d="M8.300 1.400 C11.700 1.400 14.300 3.500 14.300 6.200 C14.300 8.900 11.700 11 8.300 11 C7.500 11 6.800 10.900 6.100 10.700 C5.100 11.500 3.700 12.200 1.900 12.300 C2.700 11.500 3.200 10.500 3.300 9.500 C2.600 8.600 2.300 7.500 2.300 6.200 C2.300 3.500 4.900 1.400 8.300 1.400 Z" stroke="#d3d6dc" stroke-width="1.350" stroke-linejoin="round"/>
<circle cx="5.700" cy="6.200" r=".85" fill="#d3d6dc"/><circle cx="8.300" cy="6.200" r=".85" fill="#d3d6dc"/><circle cx="10.900" cy="6.200" r=".85" fill="#d3d6dc"/></svg>
<span class="t" style="left:1515.30px;top:760px;line-height:20px;font-size:12.3px;color:#d3d6dc;font-weight:700;letter-spacing:0.151px">1900 6522</span>
</div>
</main>
<div class="abs sb" style="left:1593px;top:0;width:7px;height:664.500px"></div>
</div>
</body>
</html>
